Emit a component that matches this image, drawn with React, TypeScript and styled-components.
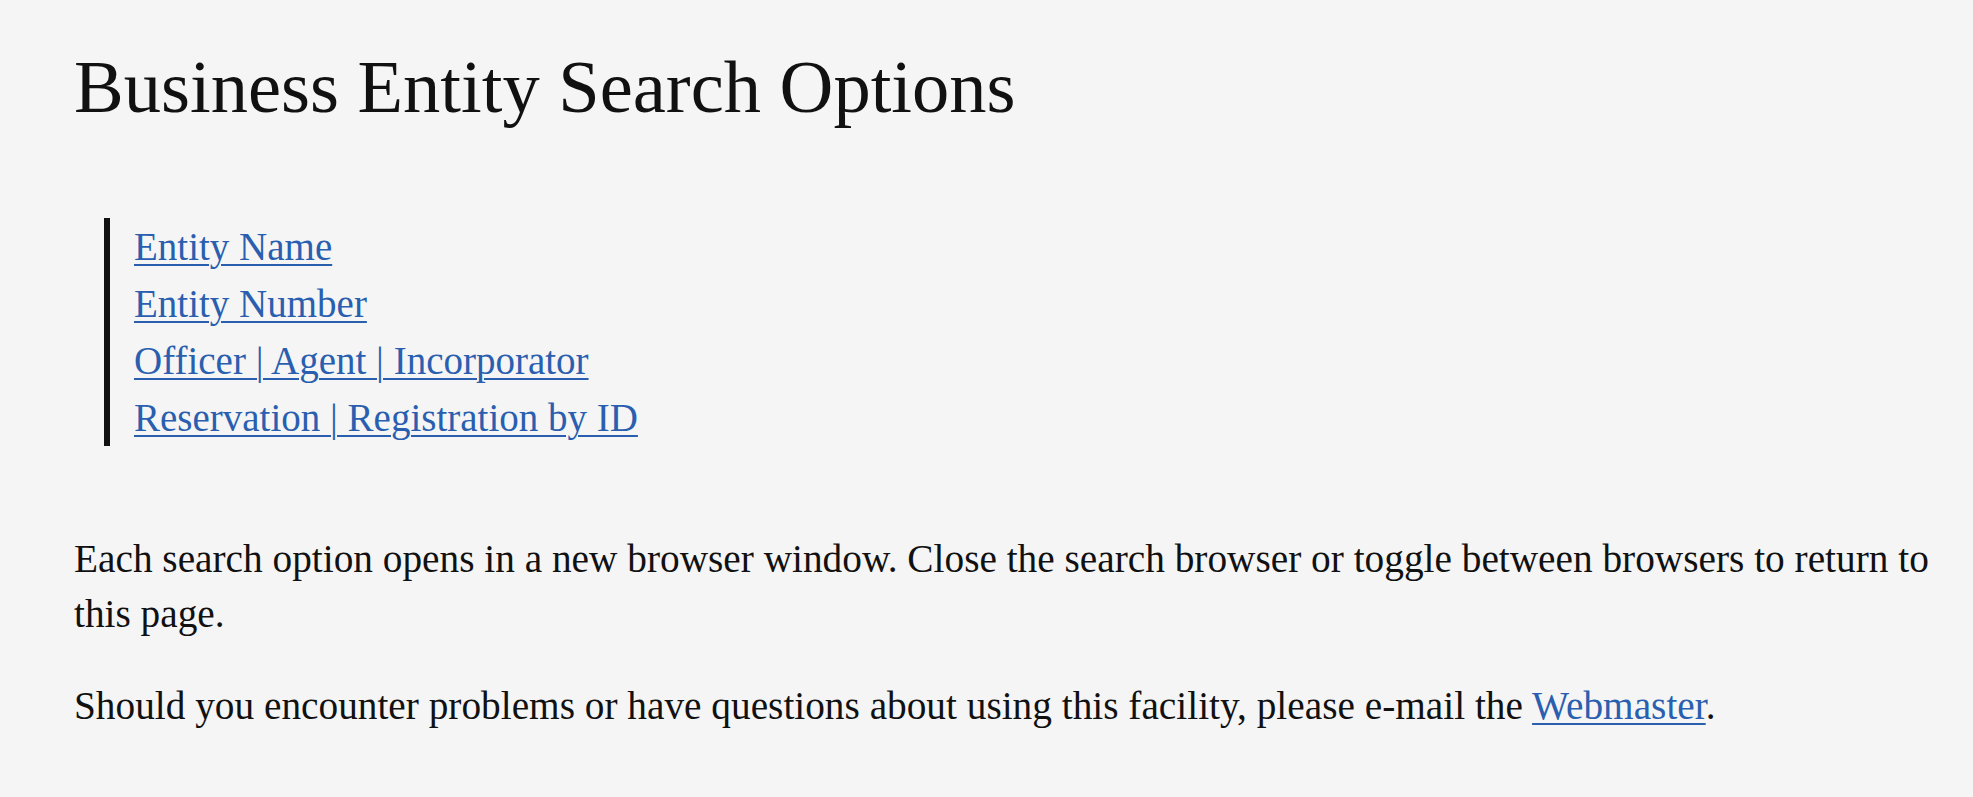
import React from "react";
import styled, { createGlobalStyle } from "styled-components";

const Global = createGlobalStyle`
  html, body { margin: 0; padding: 0; background: #f5f5f5; }
  body { font-family: "Liberation Serif", "Times New Roman", serif; color: #111; }
`;

const Page = styled.main`
  padding: 50px 20px 0 74px;
`;

const Title = styled.h1`
  margin: 0;
  font-weight: 400;
  font-size: 74.5px;
  line-height: 74px;
  color: #111;
`;

const LinkList = styled.div`
  margin: 94px 0 0 30px;
  border-left: 6px solid #111;
  padding-left: 24px;
  display: flex;
  flex-direction: column;
  font-size: 39px;
  line-height: 57px;
`;

const Link = styled.a`
  color: #2a5fb0;
  text-decoration: underline;
  text-decoration-thickness: 2px;
  text-underline-offset: 4px;
`;

const Para = styled.p<{ $top: number }>`
  margin: ${(p) => p.$top}px 0 0 0;
  font-size: 39.3px;
  line-height: 55px;
  color: #111;
`;

export default function App() {
  return (
    <>
      <Global />
      <Page>
        <Title>Business Entity Search Options</Title>
        <LinkList>
          <div><Link href="#">Entity Name</Link></div>
          <div><Link href="#">Entity Number</Link></div>
          <div><Link href="#">Officer | Agent | Incorporator</Link></div>
          <div><Link href="#">Reservation | Registration by ID</Link></div>
        </LinkList>
        <Para $top={86}>
          Each search option opens in a new browser window. Close the search browser or toggle between browsers to return to this page.
        </Para>
        <Para $top={37}>
          Should you encounter problems or have questions about using this facility, please e-mail the <Link href="#">Webmaster</Link>.
        </Para>
      </Page>
    </>
  );
}
